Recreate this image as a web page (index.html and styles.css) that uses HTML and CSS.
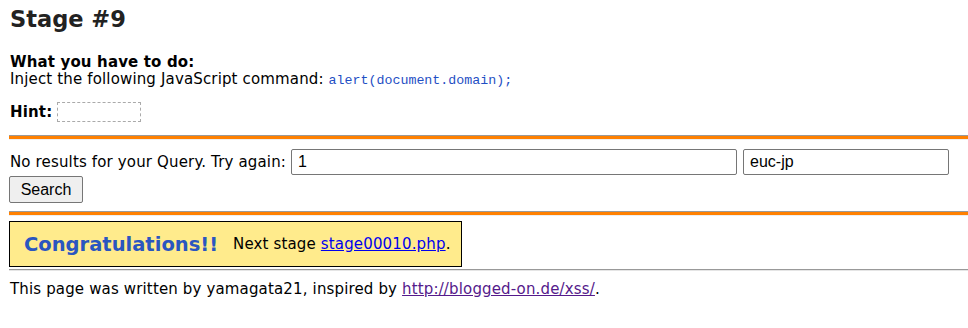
FILE: index.html
```html
<!DOCTYPE html>
<html lang="ja">
<head>
    <meta charset="UTF-8">
    <title>XSS Challenges - Stage #9</title>
    <link rel="stylesheet" href="styles.css">
</head>
<body>
    <!-- Заголовок -->
    <h2 class="stage-title">Stage #9</h2>

    <!-- Задание -->
    <div class="task">
        <b>What you have to do:</b><br>
        Inject the following JavaScript command: <code class="cmd">alert(document.domain);</code>
    </div>

    <div class="hint">
        <b>Hint:</b> <span class="hint-box"></span>
    </div>

    <hr class="orange-line">

    <!-- Форма поиска -->
    <form class="search-form" action="#" method="post">
        <div class="search-row">
            <span>No results for your Query. Try again:</span>
            <input type="text" class="query-input" name="p1" value="1">
            <input type="text" class="charset-input" name="charset" value="euc-jp">
        </div>
        <button type="button" class="search-btn">Search</button>
    </form>

    <hr class="orange-line">

    <!-- Результат -->
    <div class="congrats">
        <span class="congrats-title">Congratulations!!</span>
        <span class="next">Next stage <a href="#">stage00010.php</a>.</span>
    </div>

    <hr class="thin-line">

    <div class="footer">
        This page was written by yamagata21, inspired by <a href="#" class="visited">http://blogged-on.de/xss/</a>.
    </div>
</body>
</html>
```

FILE: styles.css
```css
/* Общие стили */
body {
    margin: 6px 0 8px 9px;
    font-family: 'DejaVu Sans', Verdana, sans-serif;
    font-size: 15px;
    line-height: 17px;
    letter-spacing: 0.15px;
    color: #000;
    background: #fff;
}

.stage-title {
    font-size: 22.5px;
    line-height: 27px;
    font-weight: 700;
    letter-spacing: 0;
    color: #222;
    margin: 0 0 21px 1px;
}

.task {
    margin-left: 1px;
}

.cmd {
    font-family: 'Liberation Mono', 'DejaVu Sans Mono', monospace;
    font-size: 13.3px;
    letter-spacing: 0;
    color: #1f4fc4;
}

.hint {
    margin: 13px 0 0 1px;
    display: flex;
    align-items: center;
    gap: 5px;
}

.hint-box {
    display: inline-block;
    width: 82px;
    height: 18px;
    border: 1px dashed #aaa;
}

/* Оранжевые линии */
.orange-line {
    border: none;
    border-top: 1px solid #999;
    border-bottom: 1px solid #eee;
    background: #ff8000;
    height: 3px;
    margin: 13px 0 0 0;
}

.thin-line {
    border: none;
    border-top: 1px solid #999;
    border-bottom: 1px solid #e5e5e5;
    margin: 2px 0 10px 0;
}

/* Форма */
.search-form {
    margin: 9px 0 8px 0;
}

.search-row {
    display: flex;
    align-items: center;
    margin-left: 1px;
    white-space: nowrap;
}

.search-row input {
    font-family: 'Liberation Sans', Arial, sans-serif;
    font-size: 16px;
    letter-spacing: 0;
    height: 26px;
    box-sizing: border-box;
    border: 1px solid #767676;
    border-radius: 2px;
    padding: 0 6px;
}

.query-input {
    width: 446px;
    margin-left: 5px;
}

.charset-input {
    width: 206px;
    margin-left: 6px;
}

.search-btn {
    margin-top: 1px;
    font-family: 'Liberation Sans', Arial, sans-serif;
    font-size: 16px;
    letter-spacing: 0;
    height: 27px;
    width: 74px;
    padding: 0;
    background: #efefef;
    border: 1px solid #767676;
    border-radius: 2px;
}

.search-form + .orange-line {
    margin-top: 0;
}

/* Поздравление */
.congrats {
    display: flex;
    align-items: center;
    width: 453px;
    height: 46px;
    box-sizing: border-box;
    margin-top: 5px;
    background: #ffeb8c;
    border: 1px solid #000;
    padding: 0 14px;
    white-space: nowrap;
}

.congrats-title {
    font-size: 19.5px;
    font-weight: 700;
    letter-spacing: 0;
    color: #2a56c0;
    margin-right: 15px;
}

.next a {
    color: #0000ee;
}

.footer {
    margin-left: 1px;
}

.footer a.visited {
    color: #551a8b;
}
```
